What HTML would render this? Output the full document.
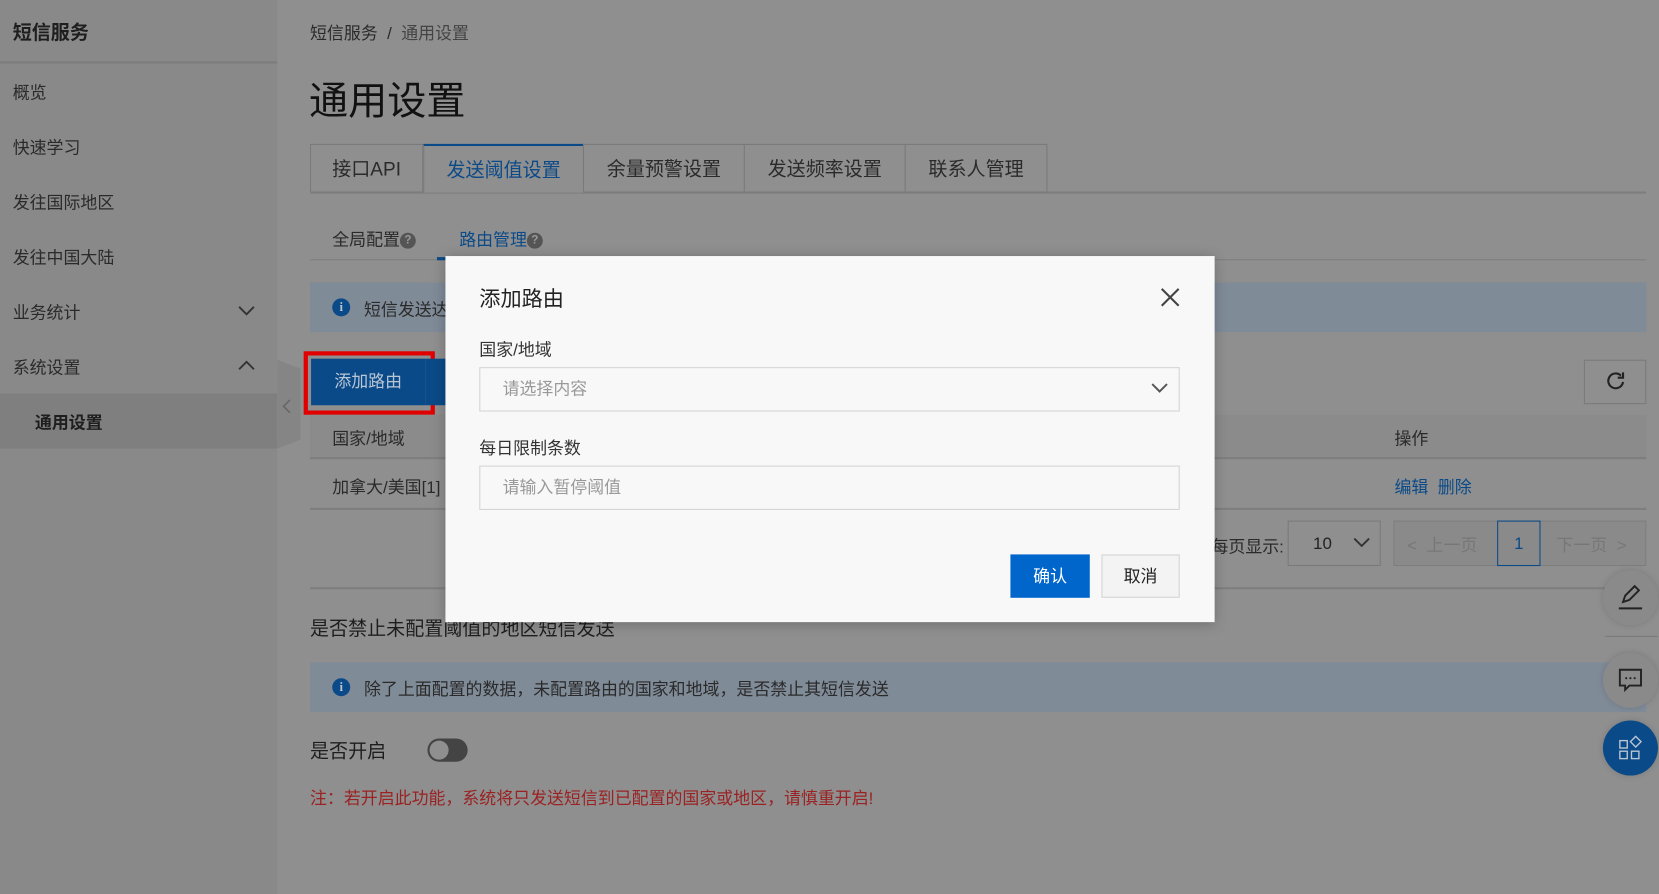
<!DOCTYPE html>
<html><head><meta charset="utf-8"><style>
html,body{margin:0;padding:0;width:1659px;height:894px;overflow:hidden;background:#8f8f8f;}
*{box-sizing:border-box;}
#w{position:absolute;left:0;top:0;width:1568px;height:845px;transform:scale(1.05804);transform-origin:0 0;font-family:"Liberation Sans","Noto Sans CJK SC",sans-serif;color:#222;}
.a{position:absolute;white-space:nowrap;}
.side{position:absolute;left:0;top:0;width:262px;height:845px;background:#898989;}
.mi{position:absolute;left:12px;font-size:16px;color:#2a2a2a;}
.tab{position:absolute;top:136px;height:46px;border:1px solid #7a7a7a;font-size:18px;color:#2a2a2a;text-align:center;line-height:46px;background:#8f8f8f;}
.q{display:inline-block;width:15px;height:15px;border-radius:50%;background:#555;color:#999;font-size:11px;line-height:15px;text-align:center;vertical-align:middle;font-weight:bold;}
.info{position:absolute;left:293px;width:1263px;height:47px;background:#808b98;}
.ii{position:absolute;left:21px;top:15px;width:17px;height:17px;border-radius:50%;background:#0b4a88;color:#b9c3cf;font-size:12px;font-weight:bold;text-align:center;line-height:17px;font-family:"Liberation Serif",serif;}
.modal{position:absolute;left:421px;top:242px;width:727px;height:346px;background:#f8f8f8;box-shadow:0 2px 12px rgba(0,0,0,.25);}
.inp{position:absolute;left:32px;width:662px;height:42px;border:1px solid #d4d4d4;background:#f8f8f8;font-size:16px;color:#999;line-height:42px;padding-left:21px;}
.circ{position:absolute;left:1515px;width:52px;height:52px;border-radius:50%;background:#8a8a8a;box-shadow:0 0 6px rgba(0,0,0,.15);}
</style></head><body><div id="w">
<div class="side">
<div class="a" style="left:12px;top:17px;font-size:18px;font-weight:bold;color:#1e1e1e;">短信服务</div>
<div class="a" style="left:0;top:58px;width:262px;height:2px;background:#7c7c7c;"></div>
<div class="mi a" style="top:74px">概览</div>
<div class="mi a" style="top:126px">快速学习</div>
<div class="mi a" style="top:178px">发往国际地区</div>
<div class="mi a" style="top:230px">发往中国大陆</div>
<div class="mi a" style="top:282px">业务统计</div>
<svg class="a" style="left:224px;top:288px" width="18" height="12"><path d="M2 2l7 7 7-7" fill="none" stroke="#333" stroke-width="1.8"/></svg>
<div class="mi a" style="top:334px">系统设置</div>
<svg class="a" style="left:224px;top:339px" width="18" height="12"><path d="M2 10l7-7 7 7" fill="none" stroke="#333" stroke-width="1.8"/></svg>
<div class="a" style="left:0;top:372px;width:262px;height:52px;background:#7f7f7f;"></div>
<div class="a" style="left:33px;top:386px;font-size:16px;font-weight:bold;color:#1e1e1e;">通用设置</div>
</div>
<div class="a" style="left:262px;top:340px;width:22px;height:84px;background:#858585;clip-path:polygon(0 0,100% 10%,100% 90%,0 100%);"></div>
<svg class="a" style="left:266px;top:376px" width="10" height="16"><path d="M8 2l-6 6 6 6" fill="none" stroke="#666" stroke-width="1.5"/></svg>

<div class="a" style="left:293px;top:18px;font-size:16px;color:#2a2a2a;">短信服务 &nbsp;/&nbsp; <span style="color:#444">通用设置</span></div>
<div class="a" style="left:292px;top:65px;font-size:37px;color:#111;">通用设置</div>
<div class="a" style="left:293px;top:181px;width:1263px;height:2px;background:#7e7e7e;"></div>
<div class="tab" style="left:293px;width:107px;">接口API</div>
<div class="tab" style="left:400px;width:152px;color:#0b4a88;border-top:2px solid #0b4a88;border-bottom-color:#8f8f8f;">发送阈值设置</div>
<div class="tab" style="left:551px;width:153px;">余量预警设置</div>
<div class="tab" style="left:703px;width:153px;">发送频率设置</div>
<div class="tab" style="left:855px;width:135px;">联系人管理</div>

<div class="a" style="left:314px;top:213px;font-size:16px;color:#2a2a2a;">全局配置<span class="q">?</span></div>
<div class="a" style="left:434px;top:213px;font-size:16px;color:#0b4a88;">路由管理<span class="q">?</span></div>
<div class="a" style="left:293px;top:245px;width:1263px;height:1px;background:#7e7e7e;"></div>
<div class="a" style="left:413px;top:243px;width:110px;height:3px;background:#0b4a88;"></div>

<div class="info" style="top:267px;"><div class="ii">i</div><div class="a" style="left:51px;top:12px;font-size:16px;color:#2a2a2a;">短信发送达到设置阈值后暂停发送</div></div>

<div class="a" style="left:287px;top:332px;width:124px;height:60px;border:4px solid #e00000;"></div>
<div class="a" style="left:294px;top:339px;width:108px;height:44px;background:#0b4a88;color:#b9c6d5;font-size:16px;line-height:46px;text-align:center;">添加路由</div>
<div class="a" style="left:402px;top:339px;width:30px;height:44px;background:#0b4a88;"></div>
<div class="a" style="left:1497px;top:340px;width:59px;height:42px;border:1px solid #7a7a7a;"></div>
<svg class="a" style="left:1517px;top:350px" width="20" height="20"><path d="M15 5A7 7 0 1 0 17 11" fill="none" stroke="#222" stroke-width="2"/><path d="M17 2v5h-5" fill="none" stroke="#222" stroke-width="2"/></svg>

<div class="a" style="left:293px;top:392px;width:1263px;height:42px;background:#8b8b8b;border-bottom:2px solid #7e7e7e;"></div>
<div class="a" style="left:314px;top:401px;font-size:16px;color:#2a2a2a;">国家/地域</div>
<div class="a" style="left:1318px;top:401px;font-size:16px;color:#2a2a2a;">操作</div>
<div class="a" style="left:293px;top:480px;width:1263px;height:2px;background:#7e7e7e;"></div>
<div class="a" style="left:314px;top:447px;font-size:16px;color:#2a2a2a;">加拿大/美国[1]</div>
<div class="a" style="left:1318px;top:447px;font-size:16px;color:#0b4a88;">编辑 &nbsp;删除</div>

<div class="a" style="left:1145px;top:503px;font-size:16px;color:#2a2a2a;">每页显示:</div>
<div class="a" style="left:1217px;top:492px;width:88px;height:43px;border:1px solid #7a7a7a;font-size:16px;line-height:43px;padding-left:23px;">10</div>
<svg class="a" style="left:1278px;top:507px" width="18" height="12"><path d="M2 2l7 7 7-7" fill="none" stroke="#333" stroke-width="1.8"/></svg>
<div class="a" style="left:1317px;top:492px;width:239px;height:43px;border:1px solid #7e7e7e;background:#8a8a8a;"></div>
<div class="a" style="left:1330px;top:502px;font-size:16px;color:#777;">&lt; &nbsp;上一页</div>
<div class="a" style="left:1415px;top:492px;width:41px;height:43px;border:1px solid #0b4a88;color:#0b4a88;font-size:16px;text-align:center;line-height:43px;">1</div>
<div class="a" style="left:1471px;top:502px;font-size:16px;color:#777;">下一页 &nbsp;&gt;</div>
<div class="a" style="left:293px;top:555px;width:1230px;height:2px;background:#7e7e7e;"></div>

<div class="a" style="left:293px;top:580px;font-size:18px;color:#1e1e1e;">是否禁止未配置阈值的地区短信发送</div>
<div class="info" style="top:626px;"><div class="ii">i</div><div class="a" style="left:51px;top:12px;font-size:16px;color:#2a2a2a;">除了上面配置的数据，未配置路由的国家和地域，是否禁止其短信发送</div></div>
<div class="a" style="left:293px;top:696px;font-size:18px;color:#1e1e1e;">是否开启</div>
<div class="a" style="left:404px;top:698px;width:38px;height:22px;border-radius:11px;background:#444;"></div>
<div class="a" style="left:406px;top:700px;width:18px;height:18px;border-radius:50%;background:#8f8f8f;"></div>
<div class="a" style="left:293px;top:741px;font-size:16px;color:#9a2222;">注：若开启此功能，系统将只发送短信到已配置的国家或地区，请慎重开启!</div>

<div class="circ" style="top:539px;"><svg style="position:absolute;left:13px;top:12px" width="26" height="26"><path d="M6 18l2-6 9-9 4 4-9 9z" fill="none" stroke="#222" stroke-width="1.8"/><path d="M2 24h22" stroke="#222" stroke-width="2"/></svg></div>
<div class="a" style="left:1517px;top:601px;width:50px;height:1px;background:#7a7a7a;"></div>
<div class="circ" style="top:617px;"><svg style="position:absolute;left:14px;top:14px" width="24" height="24"><path d="M2 2h20v15H11l-4 4v-4H2z" fill="none" stroke="#222" stroke-width="1.8"/><circle cx="8" cy="10" r="1" fill="#222"/><circle cx="12" cy="10" r="1" fill="#222"/><circle cx="16" cy="10" r="1" fill="#222"/></svg></div>
<div class="circ" style="top:681px;background:#0b4a88;"><svg style="position:absolute;left:15px;top:14px" width="24" height="24"><rect x="1" y="5" width="7" height="7" fill="none" stroke="#b9c6d5" stroke-width="1.3"/><path d="M16 1l5 5-5 5-5-5z" fill="none" stroke="#b9c6d5" stroke-width="1.3"/><rect x="1" y="15" width="7" height="7" fill="none" stroke="#b9c6d5" stroke-width="1.3"/><rect x="12" y="15" width="7" height="7" fill="none" stroke="#b9c6d5" stroke-width="1.3"/></svg></div>

<div class="modal">
<div class="a" style="left:32px;top:24px;font-size:20px;color:#222;">添加路由</div>
<svg class="a" style="left:675px;top:29px" width="20" height="20"><path d="M2 2l16 16M18 2L2 18" stroke="#444" stroke-width="2"/></svg>
<div class="a" style="left:32px;top:75px;font-size:16px;color:#333;">国家/地域</div>
<div class="inp" style="top:105px;">请选择内容</div>
<svg class="a" style="left:666px;top:119px" width="18" height="12"><path d="M2 2l7 7 7-7" fill="none" stroke="#555" stroke-width="1.8"/></svg>
<div class="a" style="left:32px;top:168px;font-size:16px;color:#333;">每日限制条数</div>
<div class="inp" style="top:198px;">请输入暂停阈值</div>
<div class="a" style="left:534px;top:282px;width:75px;height:41px;background:#0066cc;color:#fff;font-size:16px;text-align:center;line-height:43px;">确认</div>
<div class="a" style="left:620px;top:282px;width:74px;height:41px;border:1px solid #d4d4d4;background:#f3f3f3;color:#222;font-size:16px;text-align:center;line-height:41px;">取消</div>
</div>
</div></body></html>
